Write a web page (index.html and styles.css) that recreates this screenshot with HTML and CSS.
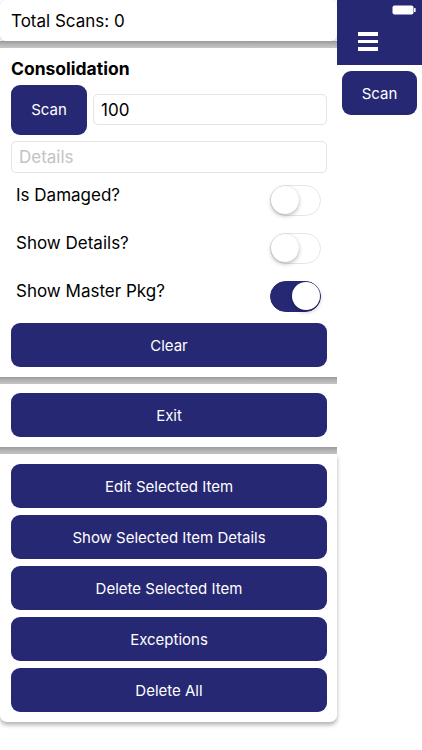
FILE: index.html
```html
<!DOCTYPE html>
<html>
<head>
<meta charset="utf-8">
<link rel="stylesheet" href="styles.css">
</head>
<body>
<div class="app">
  <div class="main">
    <div class="card card-total">Total Scans: 0</div>
    <div class="band"></div>
    <div class="card card-form">
      <div class="title">Consolidation</div>
      <div class="scan-row">
        <button class="btn btn-scan">Scan</button>
        <div class="input">100</div>
      </div>
      <div class="input input-details placeholder">Details</div>
      <div class="toggle-row first">
        <span class="label">Is Damaged?</span>
        <span class="switch"><span class="knob"></span></span>
      </div>
      <div class="toggle-row">
        <span class="label">Show Details?</span>
        <span class="switch"><span class="knob"></span></span>
      </div>
      <div class="toggle-row">
        <span class="label">Show Master Pkg?</span>
        <span class="switch on"><span class="knob"></span></span>
      </div>
      <button class="btn btn-wide">Clear</button>
    </div>
    <div class="band"></div>
    <div class="card card-exit">
      <button class="btn btn-wide">Exit</button>
    </div>
    <div class="band"></div>
    <div class="card card-actions">
      <button class="btn btn-wide">Edit Selected Item</button>
      <button class="btn btn-wide">Show Selected Item Details</button>
      <button class="btn btn-wide">Delete Selected Item</button>
      <button class="btn btn-wide">Exceptions</button>
      <button class="btn btn-wide">Delete All</button>
    </div>
  </div>
  <div class="side">
    <div class="side-head">
      <svg class="battery" width="24" height="10" viewBox="0 0 24 10">
        <rect x="0.5" y="0.5" width="21" height="9" rx="2" fill="#fff"/>
        <rect x="22" y="3" width="1.6" height="4" rx="0.6" fill="#fff"/>
      </svg>
      <div class="burger"><span></span><span></span><span></span></div>
    </div>
    <button class="btn btn-side">Scan</button>
  </div>
</div>
</body>
</html>
```

FILE: styles.css
```css
* { box-sizing: border-box; }
html, body { margin: 0; padding: 0; background: #fff; }
body {
  font-family: Inter, "Open Sans", "Liberation Sans", sans-serif;
  color: #000;
  width: 422px;
  height: 750px;
  overflow: hidden;
}
.app { display: flex; align-items: flex-start; }
.main { width: 337px; display: flex; flex-direction: column; }
.card {
  background: #fff;
  border-radius: 6px;
}
.band {
  height: 7px;
  background: linear-gradient(#9a9a9a, #b4b4b4 50%, #c6c6c6);
}
.card-total {
  height: 41px;
  padding-left: 11px;
  display: flex;
  align-items: center;
  font-size: 17px;
  box-shadow: 0 1px 3px rgba(0,0,0,0.25);
}
.card-form {
  padding: 10px 10px 10px 11px;
  display: flex;
  flex-direction: column;
  height: 329px;
}
.title { font-size: 17.5px; font-weight: 700; height: 28px; line-height: 24px; margin-top: -1px; }
.scan-row { display: flex; align-items: center; gap: 6px; height: 50px; }
.btn {
  border: 0;
  background: #272873;
  color: #fff;
  font-family: inherit;
  font-size: 15px;
  border-radius: 9px;
  padding: 0;
  cursor: pointer;
}
.btn-scan { width: 76px; height: 50px; border-radius: 9px; }
.input {
  flex: 1;
  height: 31px;
  border: 1px solid #e4e4e4;
  border-radius: 5px;
  font-size: 17px;
  padding-left: 7px;
  display: flex;
  align-items: center;
}
.input-details { flex: none; margin-top: 6px; height: 32px; }
.placeholder { color: #c3c3c3; }
.toggle-row {
  display: flex;
  justify-content: space-between;
  align-items: center;
  height: 48px;
  padding-left: 5px;
  padding-right: 6px;
  font-size: 17px;
}
.toggle-row.first { margin-top: 4px; }
.label { margin-top: -11px; }
.switch {
  width: 51px;
  height: 31px;
  border-radius: 16px;
  border: 1.5px solid #e6e6e6;
  background: #fff;
  position: relative;
  display: block;
}
.switch .knob {
  position: absolute;
  top: 0;
  left: 0;
  width: 28px;
  height: 28px;
  border-radius: 50%;
  background: #fff;
  box-shadow: 0 2px 4px rgba(0,0,0,0.25), 0 0 1px rgba(0,0,0,0.15);
}
.switch.on { background: #272873; border-color: #272873; }
.switch.on .knob { left: auto; right: 0; }
.btn-wide { width: 316px; height: 44px; display: block; }
.card-form .btn-wide { margin-top: 3px; }
.card-exit { padding: 9px 10px 10px 11px; height: 63px; }
.card-actions {
  padding: 10px 10px 10px 11px;
  display: flex;
  flex-direction: column;
  gap: 7px;
  box-shadow: 0 3px 4px rgba(0,0,0,0.3);
  border-radius: 0 0 7px 7px;
}
.side { flex: 1; display: flex; flex-direction: column; align-items: center; }
.side-head {
  width: 100%;
  height: 65px;
  background: #272873;
  position: relative;
}
.battery { position: absolute; top: 5px; left: 55px; }
.burger {
  position: absolute;
  left: 21px;
  top: 32px;
  display: flex;
  flex-direction: column;
  gap: 4px;
}
.burger span { display: block; width: 20px; height: 3.5px; background: #fff; }
.btn-side { width: 75px; height: 44px; margin-top: 6px; border-radius: 9px; font-size: 15px; }
```
